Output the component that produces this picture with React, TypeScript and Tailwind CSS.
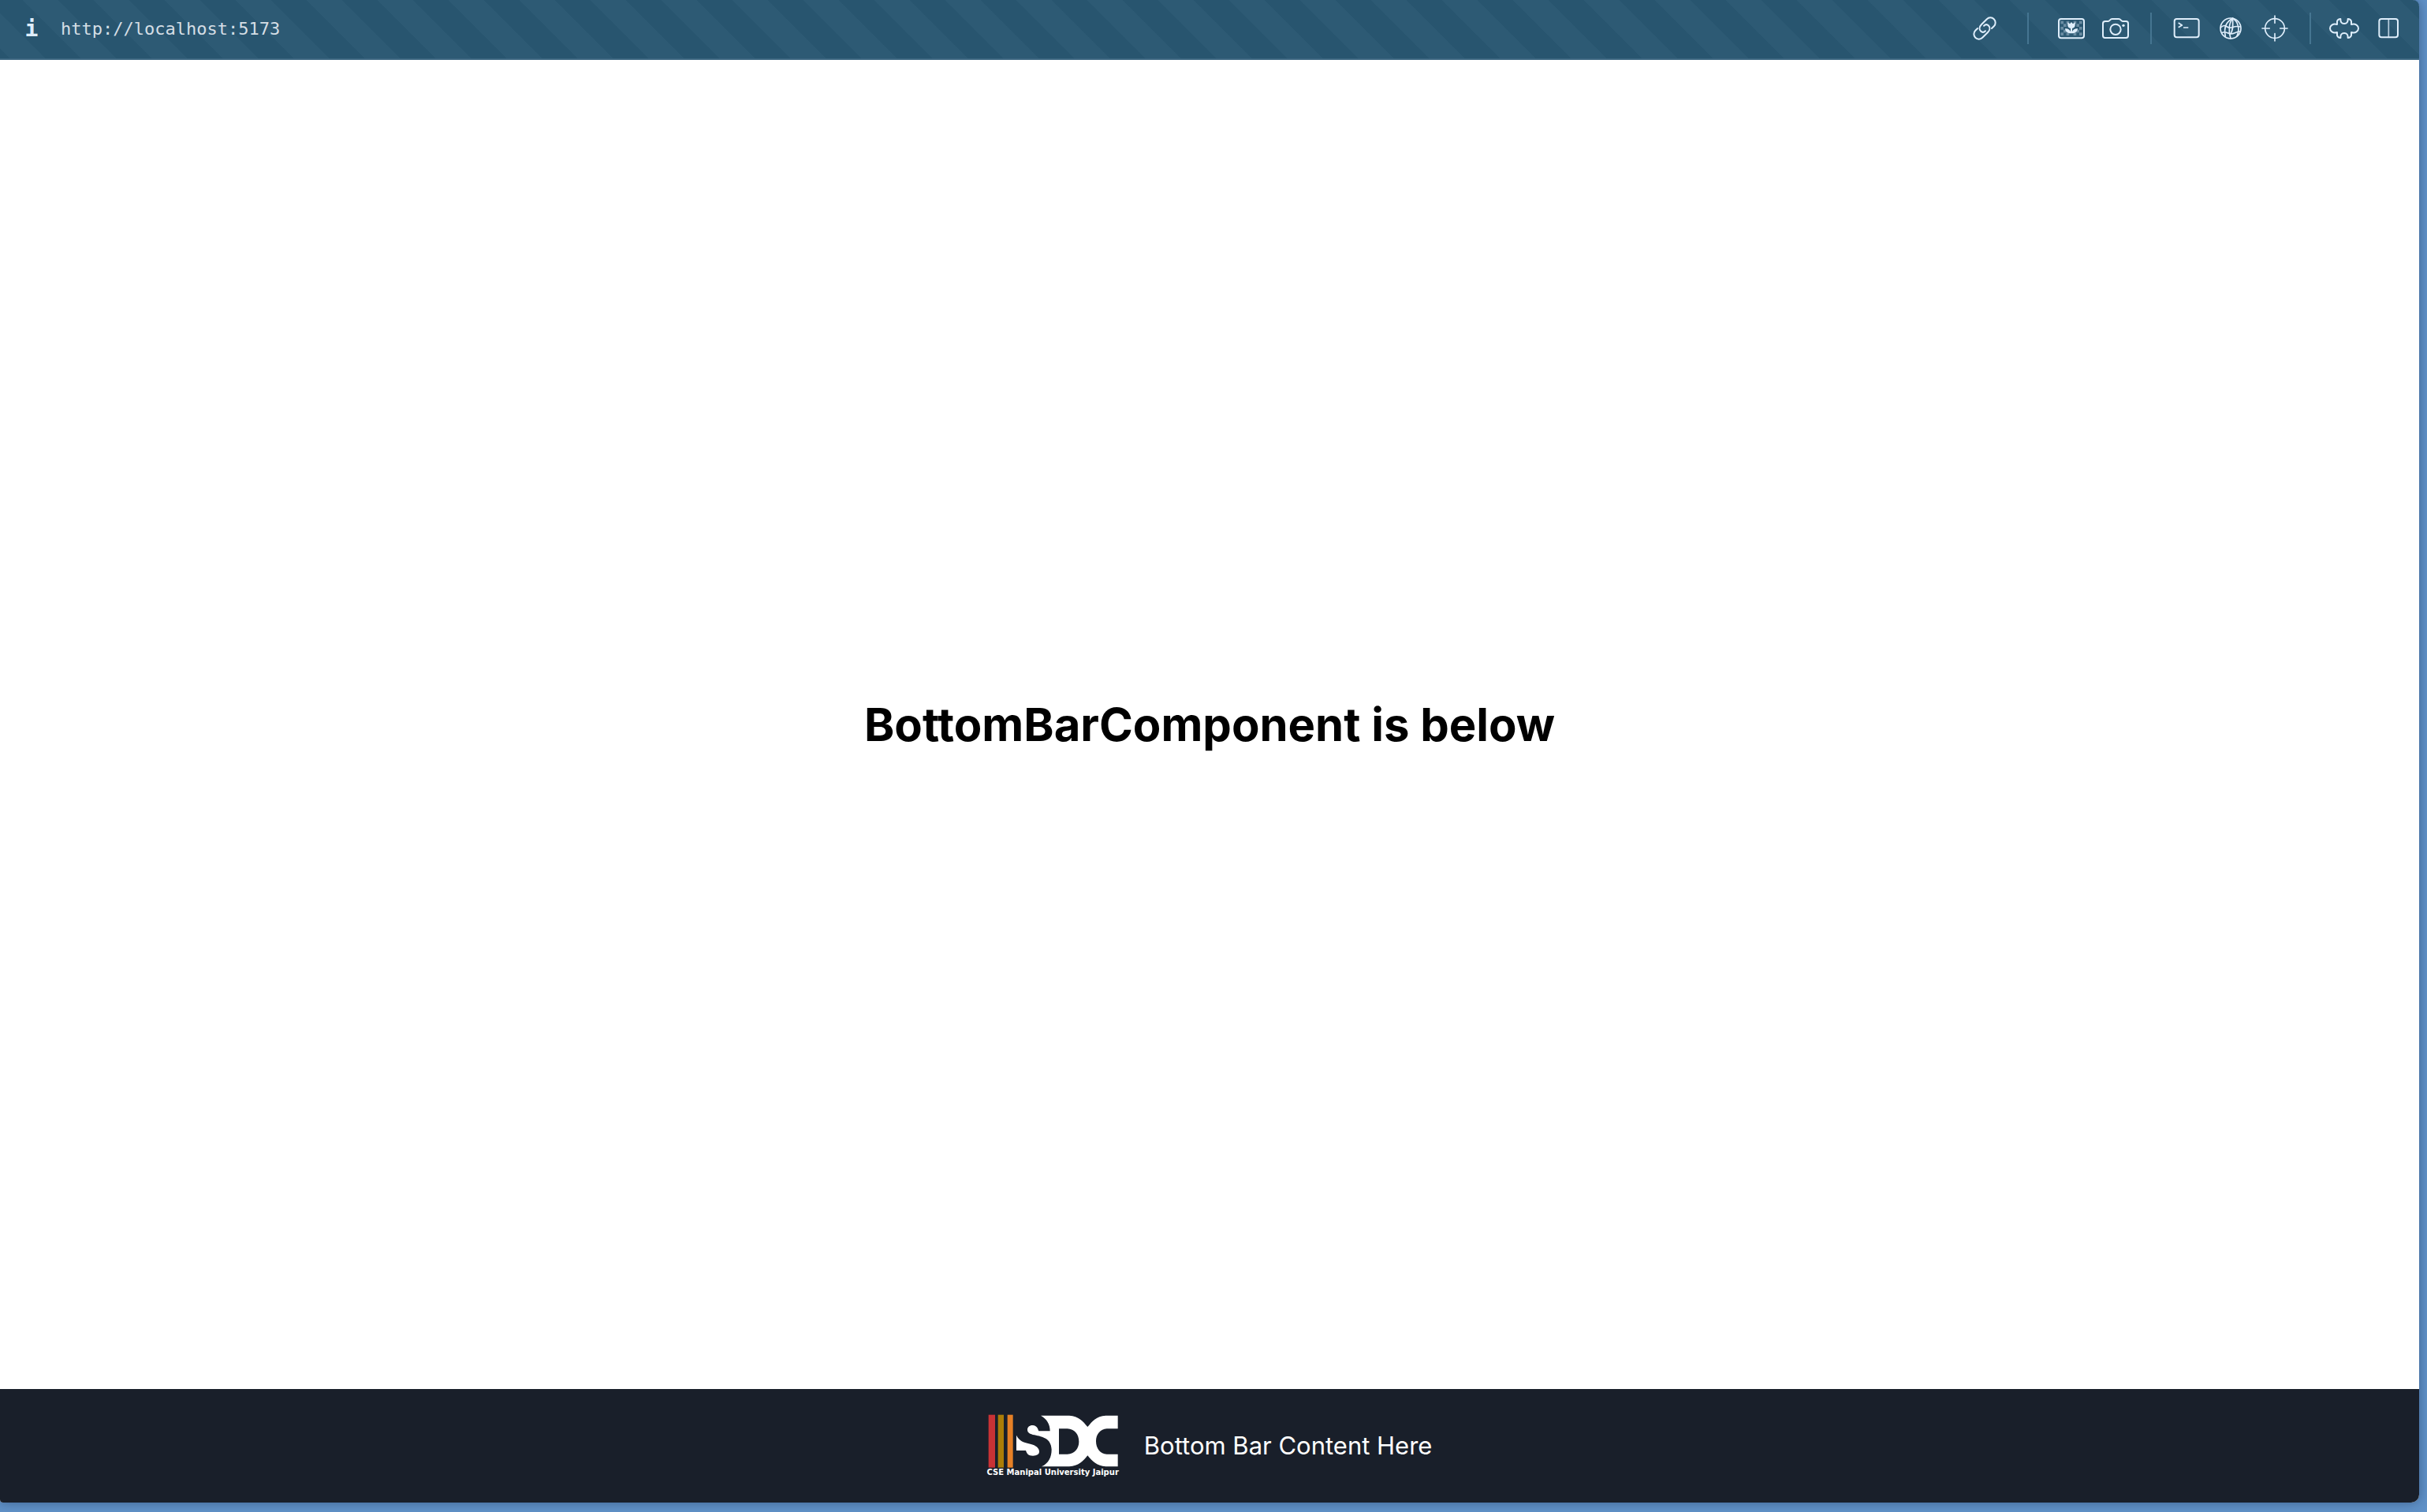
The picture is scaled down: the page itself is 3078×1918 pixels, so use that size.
import type { ReactNode } from "react";

function Icon({ children }: { children: ReactNode }) {
  return (
    <svg
      viewBox="-60 -60 120 120"
      className="size-10"
      fill="none"
      stroke="currentColor"
      strokeWidth="6"
      strokeLinecap="round"
      strokeLinejoin="round"
      aria-hidden="true"
    >
      {children}
    </svg>
  );
}

const chainHalf = "M19 19H31A19 19 0 0 0 31 -19H2C-10 -19 -18 -12 -18 -3C-18 5 -13 9 -5 9";

function LinkIcon() {
  return (
    <Icon>
      <g transform="rotate(-45)">
        <path d={chainHalf} />
        <path d={chainHalf} transform="rotate(180)" />
      </g>
    </Icon>
  );
}

const checker = [
  [-41, -28], [-19, -28], [8, -28], [30, -28],
  [-30, -17], [19, -17],
  [-41, -6], [30, -6],
  [-30, 5], [19, 5],
  [-41, 16], [-19, 16], [8, 16], [30, 16],
];

function PictureIcon() {
  return (
    <Icon>
      <rect x="-48" y="-36" width="96" height="73" rx="9" />
      {checker.map(([x, y]) => (
        <rect key={`${x},${y}`} x={x} y={y} width="11" height="11" fill="currentColor" stroke="none" opacity="0.35" />
      ))}
      <path
        d="M-14 -23L-6 -17L0 -24L6 -17L14 -23V-12C14 -5 9 -1 3 0V12C7 4 14 0 24 1C23 13 14 19 0 19C-14 19 -23 13 -24 1C-14 0 -7 4 -3 12V0C-9 -1 -14 -5 -14 -12Z"
        fill="currentColor"
        stroke="none"
      />
    </Icon>
  );
}

function CameraIcon() {
  return (
    <Icon>
      <path d="M-39 -27H-28C-22 -27 -21 -36 -13 -36H12C20 -36 21 -27 27 -27H40Q48 -27 48 -19V28Q48 36 40 36H-40Q-48 36 -48 28V-19Q-48 -27 -39 -27Z" />
      <circle cx="0" cy="4" r="20" />
      <circle cx="30" cy="-11" r="5" fill="currentColor" stroke="none" />
    </Icon>
  );
}

function TerminalIcon() {
  return (
    <Icon>
      <rect x="-46" y="-36" width="93" height="70" rx="9" />
      <path d="M-31 -21L-17 -12L-31 -4M-12 -3H7" strokeWidth="5" strokeLinecap="butt" />
    </Icon>
  );
}

function GlobeIcon() {
  return (
    <Icon>
      <circle r="39" strokeWidth="5" />
      <g strokeWidth="5">
        <path d="M8 -38C-12 -28 -28 -8 -20 30" />
        <path d="M8 -38C-6 -22 -10 8 0 38" />
        <path d="M8 -38C8 -10 10 6 0 20" />
        <path d="M8 -38C28 -26 36 2 24 29" />
        <path d="M-38 -3Q-26 -14 -19 -9Q-6 0 6 -4Q22 -10 37 -6" />
        <path d="M-34 17Q-24 12 -16 16Q2 24 14 18Q26 12 36 12" />
      </g>
    </Icon>
  );
}

function TargetIcon() {
  return (
    <Icon>
      <circle r="37" strokeWidth="5" />
      <path d="M0 -48V-20M0 20V48M-48 0H-20M20 0H48" strokeWidth="5" />
    </Icon>
  );
}

function PuzzleIcon() {
  return (
    <Icon>
      <path d="M-27 -15V-27Q-24 -36 -14 -36Q-15 -18 0 -18Q15 -18 14 -36Q24 -36 27 -27V-15C43 -20 54 -10 54 0C54 10 43 20 27 15V27Q24 36 14 36Q15 18 0 18Q-15 18 -14 36Q-24 36 -27 27V15C-43 20 -54 10 -54 0C-54 -10 -43 -20 -27 -15Z" />
    </Icon>
  );
}

function SplitIcon() {
  return (
    <Icon>
      <rect x="-35" y="-36" width="71" height="70" rx="9" />
      <path d="M1 -36V34" opacity="0.8" strokeWidth="5" />
    </Icon>
  );
}

function ToolButton({ label, children }: { label: string; children: ReactNode }) {
  return (
    <button type="button" aria-label={label} className="flex h-10 w-14 items-center justify-center">
      {children}
    </button>
  );
}

function Toolbar() {
  return (
    <header className="flex h-[76px] shrink-0 items-center justify-between rounded-tr-lg border-b-2 border-[#3c6680] bg-[#28556f] bg-[linear-gradient(45deg,#2d5a74_25%,transparent_25%,transparent_50%,#2d5a74_50%,#2d5a74_75%,transparent_75%)] bg-[length:90px_90px] bg-[position:29px_0px] pr-[11px] pb-[2px] pl-5 text-[#dfeefb]">
      <div className="flex items-center pt-[2px] font-['DejaVu_Sans_Mono',monospace]">
        <button type="button" aria-label="Site information" className="w-10 text-[28px] leading-10 font-bold">
          i
        </button>
        <a href="http://localhost:5173" className="ml-[17px] text-[22px] leading-10 text-[#d5dee5]">
          http://localhost:5173
        </a>
      </div>
      <div className="flex items-center">
        <ToolButton label="Copy link"><LinkIcon /></ToolButton>
        <div className="mx-[26px] h-10 w-[2px] bg-[#457591]" />
        <ToolButton label="Capture full page"><PictureIcon /></ToolButton>
        <ToolButton label="Capture area"><CameraIcon /></ToolButton>
        <div className="mx-4 h-10 w-[2px] bg-[#457591]" />
        <ToolButton label="Console"><TerminalIcon /></ToolButton>
        <ToolButton label="Network"><GlobeIcon /></ToolButton>
        <ToolButton label="Inspect"><TargetIcon /></ToolButton>
        <div className="mr-[14px] ml-4 h-10 w-[2px] bg-[#457591]" />
        <ToolButton label="Extensions"><PuzzleIcon /></ToolButton>
        <ToolButton label="Split view"><SplitIcon /></ToolButton>
      </div>
    </header>
  );
}

function Logo() {
  return (
    <div className="flex flex-col items-center">
      <svg viewBox="63 130 495 204" className="h-[68px] w-[165px]" role="img" aria-label="SDC">
        <rect x="65" y="132" width="25" height="201" fill="#c83235" />
        <rect x="101" y="132" width="22" height="201" fill="#ab7d07" />
        <rect x="137" y="132" width="21" height="201" fill="#e68026" />
        <path
          fill="#fff"
          fillRule="evenodd"
          d="M264 135H372C408 137 424 156 442 178C460 156 475 137 511 135H557V185H515C490 187 474 206 474 233C474 260 490 281 515 282H557V329H511C478 327 460 309 442 287C424 309 408 327 372 329H267C294 316 305 293 305 264C303 222 272 216 240 209C222 205 213 200 213 189C213 178 222 171 234 172C247 173 252 182 256 194H299C299 168 287 148 264 135ZM333 185V282H365C393 280 409 260 409 234C409 207 393 186 365 185Z"
        />
        <path
          fill="#fff"
          d="M171 210C182 232 200 238 224 243C246 248 258 259 258 272C258 283 249 288 234 288C217 288 211 281 207 268H171Z"
        />
      </svg>
      <span className="font-['DejaVu_Sans',sans-serif] text-[10px] leading-3 font-bold whitespace-nowrap text-white">
        CSE Manipal University Jaipur
      </span>
    </div>
  );
}

export default function App() {
  return (
    <div className="h-screen bg-[#6091c7] pr-[10px] pb-3 font-['Inter',sans-serif]">
      <div className="flex h-full flex-col rounded-r-[10px] rounded-bl bg-white shadow-[0_0_14px_rgba(20,40,70,0.45)]">
        <Toolbar />
        <main className="flex flex-1 items-center justify-center">
          <h1 className="text-[58px] leading-none font-bold text-black">BottomBarComponent is below</h1>
        </main>
        <footer className="flex h-36 shrink-0 items-center justify-center gap-8 rounded-br-[10px] rounded-bl bg-[#191f2a]">
          <Logo />
          <p className="text-[31px] leading-10 text-white">Bottom Bar Content Here</p>
        </footer>
      </div>
    </div>
  );
}
